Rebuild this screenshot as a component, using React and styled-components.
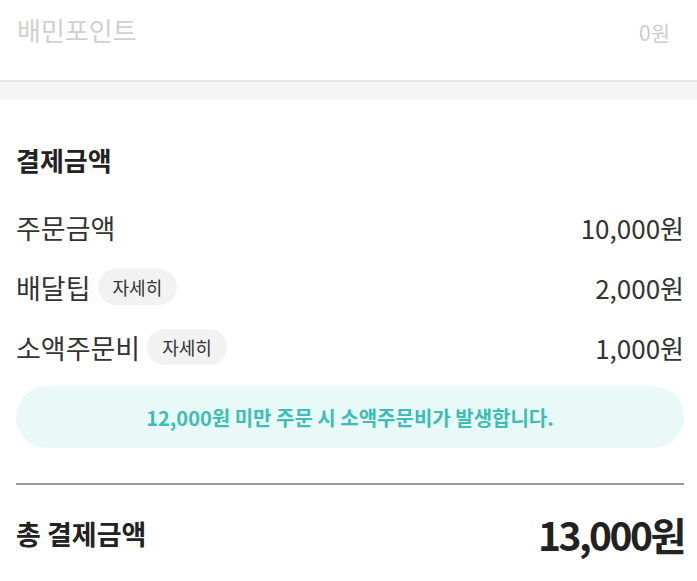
import React from "react";
import styled, { createGlobalStyle } from "styled-components";

const Global = createGlobalStyle`
  html, body { margin: 0; padding: 0; background: #fff; }
  body { font-family: "Noto Sans CJK KR", "Noto Sans", sans-serif; color: #333; }
  * { box-sizing: border-box; }
`;

const Page = styled.div`
  width: 697px;
  display: flex;
  flex-direction: column;
`;

const PointRow = styled.div`
  height: 82px;
  padding: 11px 27px 0 17px;
  display: flex;
  justify-content: space-between;
  align-items: flex-start;
  border-bottom: 2px solid #e8e8e8;
`;

const PointLabel = styled.span`
  font-size: 26px;
  line-height: 38px;
  color: #d0d0d0;
`;

const PointValue = styled.span`
  font-size: 21px;
  line-height: 42px;
  color: #cccccc;
`;

const Band = styled.div`
  height: 17px;
  background: #f5f5f5;
`;

const Section = styled.section`
  padding: 0 13px 0 16px;
  display: flex;
  flex-direction: column;
`;

const Title = styled.h2`
  margin: 43px 0 19px;
  font-size: 26px;
  line-height: 36px;
  font-weight: 700;
  color: #222;
`;

const Row = styled.div`
  height: 60px;
  display: flex;
  align-items: center;
  justify-content: space-between;
`;

const Label = styled.div`
  display: flex;
  align-items: center;
  gap: 7px;
  font-size: 27px;
  color: #333;
`;

const Badge = styled.span`
  height: 36px;
  padding: 0 15px;
  border-radius: 18px;
  background: #f2f2f2;
  font-size: 18px;
  line-height: 36px;
  color: #333;
`;

const Value = styled.span`
  font-size: 26px;
  color: #333;
`;

const Notice = styled.div`
  margin-top: 9px;
  height: 62px;
  border-radius: 31px;
  background: #e9f9f8;
  display: flex;
  align-items: center;
  justify-content: center;
  font-size: 20px;
  font-weight: 700;
  color: #3cbdb5;
`;

const Divider = styled.hr`
  margin: 35px 0 0;
  border: 0;
  height: 2px;
  background: #999;
`;

const TotalRow = styled.div`
  padding-top: 24px;
  height: 96px;
  display: flex;
  justify-content: space-between;
  align-items: flex-start;
`;

const TotalLabel = styled.span`
  font-size: 27px;
  line-height: 50px;
  font-weight: 700;
  color: #222;
`;

const TotalValue = styled.span`
  font-size: 39px;
  line-height: 50px;
  letter-spacing: -2.5px;
  font-weight: 700;
  color: #222;
`;

const items = [
  { label: "주문금액", value: "10,000원" },
  { label: "배달팁", value: "2,000원", detail: true },
  { label: "소액주문비", value: "1,000원", detail: true },
];

export default function App() {
  return (
    <Page>
      <Global />
      <PointRow>
        <PointLabel>배민포인트</PointLabel>
        <PointValue>0원</PointValue>
      </PointRow>
      <Band />
      <Section>
        <Title>결제금액</Title>
        {items.map((it) => (
          <Row key={it.label}>
            <Label>
              {it.label}
              {it.detail && <Badge>자세히</Badge>}
            </Label>
            <Value>{it.value}</Value>
          </Row>
        ))}
        <Notice>12,000원 미만 주문 시 소액주문비가 발생합니다.</Notice>
        <Divider />
        <TotalRow>
          <TotalLabel>총 결제금액</TotalLabel>
          <TotalValue>13,000원</TotalValue>
        </TotalRow>
      </Section>
    </Page>
  );
}
